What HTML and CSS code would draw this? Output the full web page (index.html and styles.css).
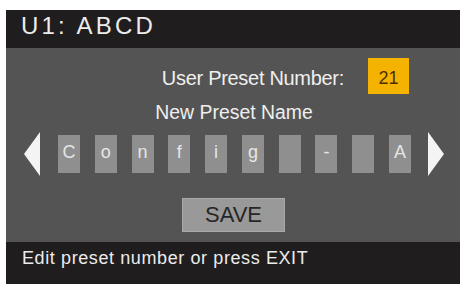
FILE: index.html
```html
<!DOCTYPE html>
<html>
<head>
<meta charset="utf-8">
<link rel="stylesheet" href="styles.css">
</head>
<body>
<div class="screen">
  <div class="header">U1: ABCD</div>
  <div class="main">
    <div class="number-row">
      <span class="label">User Preset Number:</span>
      <span class="number">21</span>
    </div>
    <div class="name-title">New Preset Name</div>
    <div class="name-row">
      <svg class="arrow" width="16" height="44" viewBox="0 0 16 44"><polygon points="16,0 16,44 0,22" fill="#f4f4f4"/></svg>
      <div class="cells">
        <span class="cell">C</span>
        <span class="cell">o</span>
        <span class="cell">n</span>
        <span class="cell">f</span>
        <span class="cell">i</span>
        <span class="cell">g</span>
        <span class="cell"></span>
        <span class="cell">-</span>
        <span class="cell"></span>
        <span class="cell">A</span>
      </div>
      <svg class="arrow" width="16" height="44" viewBox="0 0 16 44"><polygon points="0,0 0,44 16,22" fill="#f4f4f4"/></svg>
    </div>
    <div class="save-row"><span class="save">SAVE</span></div>
  </div>
  <div class="footer">Edit preset number or press EXIT</div>
</div>
</body>
</html>
```

FILE: styles.css
```css
html, body {
  margin: 0;
  padding: 0;
  background: #ffffff;
}
body {
  font-family: "Liberation Sans", Arial, sans-serif;
}
.screen {
  margin: 10px 0 0 6px;
  width: 454px;
  height: 274px;
  display: flex;
  flex-direction: column;
  background: #545454;
}
.header {
  height: 38px;
  box-sizing: border-box;
  background: #1f1d1e;
  color: #ececec;
  font-size: 24px;
  line-height: 24px;
  letter-spacing: 3.2px;
  padding: 4px 0 0 15px;
}
.main {
  flex: 1;
  display: flex;
  flex-direction: column;
}
.number-row {
  margin-top: 10px;
  height: 36px;
  display: flex;
  justify-content: flex-end;
  align-items: center;
  gap: 24px;
  padding-right: 51px;
}
.label {
  color: #efefef;
  font-size: 20px;
  line-height: 20px;
  letter-spacing: -0.3px;
  padding-top: 3px;
}
.number {
  width: 41px;
  height: 36px;
  box-sizing: border-box;
  padding-top: 4px;
  background: #f4b300;
  color: #4a3000;
  font-size: 18px;
  display: flex;
  align-items: center;
  justify-content: center;
}
.name-title {
  margin-top: 9px;
  text-align: center;
  color: #efefef;
  font-size: 19.4px;
  line-height: 19px;
  padding-left: 2px;
}
.name-row {
  margin-top: 10px;
  height: 44px;
  display: flex;
  align-items: center;
  justify-content: center;
  padding-left: 2px;
}
.arrow {
  display: block;
}
.cells {
  display: flex;
  gap: 14.8px;
  margin: 0 17px 0 18px;
}
.cell {
  width: 22px;
  height: 38px;
  box-sizing: border-box;
  padding-bottom: 3px;
  background: #8f8f8f;
  color: #e6e6e6;
  font-size: 18px;
  display: flex;
  align-items: center;
  justify-content: center;
}
.save-row {
  margin-top: 22px;
  display: flex;
  justify-content: center;
  padding-left: 1px;
}
.save {
  width: 103px;
  height: 34px;
  box-sizing: border-box;
  border: 1px solid #a9a9a9;
  background: #999999;
  color: #262626;
  font-size: 22px;
  display: flex;
  align-items: center;
  justify-content: center;
}
.footer {
  height: 42px;
  box-sizing: border-box;
  background: #1f1d1e;
  color: #ececec;
  font-size: 18px;
  line-height: 18px;
  letter-spacing: 0.6px;
  padding: 7px 0 0 16px;
}
```
